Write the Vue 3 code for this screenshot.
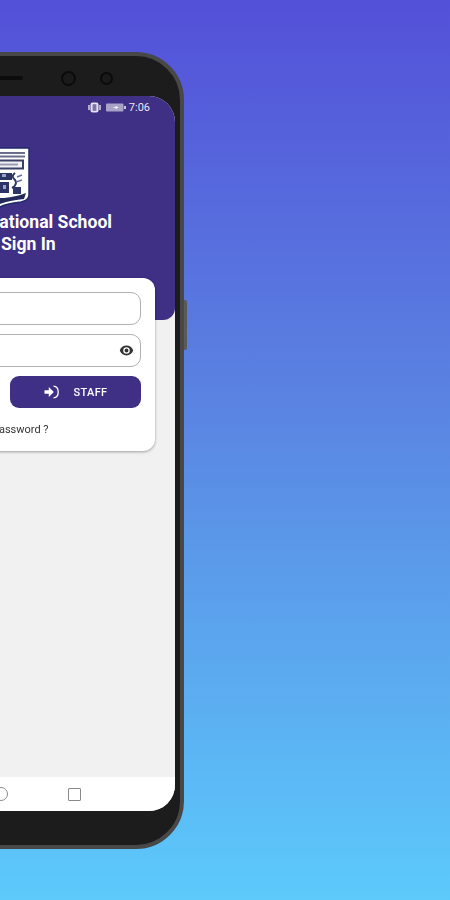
<template>
  <div class="page">
    <div class="phone">
      <span class="side-key"></span>
      <div class="bezel-top">
        <span></span>
        <span class="speaker"></span>
        <div class="cameras">
          <span class="camera big"></span>
          <span class="camera"></span>
        </div>
      </div>
      <div class="screen">
        <div class="header">
          <div class="status-bar">
            <svg class="vibrate" width="13" height="11" viewBox="0 0 13 11">
              <rect x="2.500" y="0.500" width="8" height="10" rx="2" fill="#e4e2ee" />
              <rect x="4.600" y="2.200" width="3.800" height="6.600" fill="#7c72ab" />
              <path d="M1 3v5M12 3v5" stroke="#d8d5e6" stroke-width="1.500" />
            </svg>
            <svg class="battery" width="20" height="9" viewBox="0 0 20 9">
              <rect x="0" y="0.500" width="17.500" height="8" rx="1" fill="#a9a3c8" />
              <rect x="18" y="3" width="2" height="3" fill="#c8c4dc" />
              <path d="M7 4.500h2.500V3l3 1.500-3 1.500V5H7z" fill="#fff" />
            </svg>
            <span class="time">7:06</span>
          </div>
          <svg class="crest" width="60" height="62" viewBox="0 0 60 62">
            <path d="M1 1h58v47c0 4-3 6-8 7-9 1-16 2-21 5-5-3-12-4-21-5-5-1-8-3-8-7z" fill="#fff" stroke="#1f2a6b" stroke-width="1.500" />
            <path d="M5 6h50M5 9.500h50" stroke="#6a6e8c" stroke-width="2" />
            <rect x="7" y="13.500" width="46" height="8" fill="#f2f2f5" stroke="#3a3f66" stroke-width="2" />
            <path d="M12 17.500h36" stroke="#9a9db2" stroke-width="2" />
            <path d="M30 26h12v7H30zM30 35h9v11H30z" fill="#2b3264" />
            <path d="M32 27h4v3h-4zM33 38h3v4h-3z" fill="#9aa2c8" />
            <path d="M45 26c-4 3-2 5 0 7s1 6-3 8" fill="none" stroke="#2e3568" stroke-width="2" />
            <path d="M47 30l5-2M46 35l6-2" stroke="#6770a4" stroke-width="1.500" />
            <path d="M43 40h8v7h-8z" fill="#2e3568" />
            <path d="M10 30h14v5H10zM9 38h14v8H9z" fill="#2e3568" />
            <path d="M4 47c8 2 14 3 22 4h8c8-1 14-2 22-5l-2 6c-8 1-16 2-24 5-8-3-16-4-24-5z" fill="#23295a" />
          </svg>
          <h1 class="title">Sunrise International School</h1>
          <h2 class="title">Parent Sign In</h2>
        </div>

        <div class="card">
          <div class="field"></div>
          <div class="field password">
            <svg width="15" height="11" viewBox="0 0 24 18">
              <path d="M12 1C7 1 2.700 4.100 1 9c1.700 4.900 6 8 11 8s9.300-3.100 11-8c-1.700-4.900-6-8-11-8zm0 13.300A5.300 5.300 0 1 1 12 3.700a5.300 5.300 0 0 1 0 10.600zM12 5.800a3.200 3.200 0 1 0 0 6.400 3.200 3.200 0 0 0 0-6.400z" fill="#333" />
            </svg>
          </div>
          <div class="actions">
            <button class="btn" v-for="label in buttons" :key="label">
              <svg width="15" height="14" viewBox="0 0 15 14">
                <path d="M0.500 5.200h4.300V2l5 5-5 5V8.800H0.500z" fill="#fff" />
                <path d="M9.500 1.200c3 .2 4.700 2.600 4.700 5.800s-1.700 5.600-4.700 5.800" fill="none" stroke="#fff" stroke-width="1.300" />
              </svg>
              <span>{{ label }}</span>
            </button>
          </div>
          <a class="forgot">Forgot Password ?</a>
        </div>

        <div class="nav-bar">
          <svg width="14" height="14" viewBox="0 0 14 14"><path d="M11.500 1.500v11L2.500 7z" fill="none" stroke="#8a8a8a" stroke-width="1.300" /></svg>
          <span class="nav-circle"></span>
          <span class="nav-square"></span>
        </div>
      </div>
      <div class="bezel-bottom"></div>
    </div>
  </div>
</template>

<script setup>
const buttons = ['STUDENT', 'STAFF']
</script>

<style>
html,
body {
  margin: 0;
}
</style>

<style scoped>
.page {
  width: 450px;
  height: 900px;
  overflow: hidden;
  background: linear-gradient(180deg, #5350d8 0%, #5a84e2 45%, #5ccafb 100%);
  font-family: Roboto, "Liberation Sans", sans-serif;
  padding-top: 52px;
  box-sizing: border-box;
}

.phone {
  position: relative;
  width: 368px;
  height: 797px;
  margin-left: -184px;
  box-sizing: border-box;
  border: 4px solid #484848;
  border-radius: 48px;
  background: #1c1c1c;
  padding: 0 5px;
  display: flex;
  flex-direction: column;
  filter: blur(0.5px);
}

.side-key {
  position: absolute;
  right: -7px;
  top: 244px;
  width: 3px;
  height: 50px;
  background: #5a5a5a;
  border-radius: 0 2px 2px 0;
}

.bezel-top {
  height: 40px;
  flex: none;
  display: grid;
  grid-template-columns: 1fr auto 1fr;
  align-items: center;
  padding-top: 4px;
  box-sizing: border-box;
}

.speaker {
  width: 46px;
  height: 4px;
  background: #0c0c0c;
  border-radius: 2px;
}

.cameras {
  display: flex;
  align-items: center;
  gap: 24px;
  padding-left: 38px;
}

.camera {
  width: 9px;
  height: 9px;
  border-radius: 50%;
  background: #1a1a1a;
  border: 2px solid #0b0b0b;
}

.camera.big {
  width: 11px;
  height: 11px;
}

.screen {
  flex: 1;
  border-radius: 26px;
  overflow: hidden;
  background: #f1f1f1;
  display: flex;
  flex-direction: column;
}

.bezel-bottom {
  height: 34px;
  flex: none;
}

.header {
  height: 224px;
  flex: none;
  background: #3f2f85;
  border-radius: 0 0 12px 12px;
  display: flex;
  flex-direction: column;
  align-items: center;
  color: #fff;
}

.status-bar {
  align-self: stretch;
  height: 22px;
  display: flex;
  align-items: center;
  justify-content: flex-end;
  padding-right: 25px;
}

.vibrate {
  margin-right: 5px;
}

.battery {
  margin-right: 3px;
}

.time {
  font-size: 11px;
  color: #e8e6f2;
}

.crest {
  margin-top: 29px;
  margin-bottom: 2px;
  flex: none;
}

.title {
  margin: 0;
  font-size: 17.6px;
  line-height: 22px;
  font-weight: 700;
  white-space: nowrap;
}

.card {
  flex: none;
  height: 173px;
  margin: -42px 20px 0;
  padding: 14px 14px 0;
  box-sizing: border-box;
  background: #fff;
  border-radius: 12px;
  box-shadow: 0 1px 3px rgba(0, 0, 0, 0.35);
  display: flex;
  flex-direction: column;
  align-items: stretch;
}

.field {
  height: 33px;
  box-sizing: border-box;
  border: 1px solid #b0b0b0;
  border-radius: 10px;
  margin-bottom: 9px;
  display: flex;
  align-items: center;
  justify-content: flex-end;
  padding-right: 6px;
}

.actions {
  display: grid;
  grid-template-columns: 131px 131px;
  justify-content: space-between;
}

.btn {
  height: 32px;
  border: none;
  border-radius: 9px;
  background: #3f2f85;
  color: #fff;
  font-family: inherit;
  font-size: 11px;
  font-weight: 500;
  letter-spacing: 0.3px;
  display: flex;
  align-items: center;
  justify-content: center;
  gap: 15px;
  padding: 0;
}

.forgot {
  margin-top: 15px;
  font-size: 11px;
  line-height: 14px;
  text-align: center;
  color: #333;
  padding-left: 6px;
}

.nav-bar {
  margin-top: auto;
  height: 34px;
  flex: none;
  background: #fff;
  display: flex;
  align-items: center;
  justify-content: center;
  gap: 60px;
}

.nav-circle {
  width: 12px;
  height: 12px;
  border-radius: 50%;
  border: 1.5px solid #8a8a8a;
}

.nav-square {
  width: 11px;
  height: 11px;
  border: 1.5px solid #8a8a8a;
  border-radius: 1px;
}
</style>
